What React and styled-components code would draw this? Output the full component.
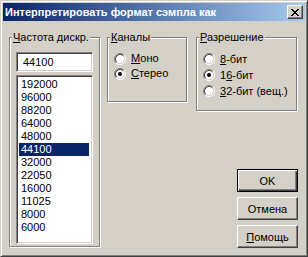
import React from "react";
import styled, { createGlobalStyle } from "styled-components";

const FACE = "#d4d0c8";

const Global = createGlobalStyle`
  html, body { margin: 0; padding: 0; background: ${FACE}; }
  body { font-family: "Liberation Sans", Arial, sans-serif; font-size: 11px; }
  * { box-sizing: border-box; }
`;

const Window = styled.div`
  width: 308px;
  height: 257px;
  display: flex;
  flex-direction: column;
  background: ${FACE};
  border: 1px solid;
  border-color: ${FACE} #404040 #404040 ${FACE};
  box-shadow: inset 1px 1px 0 #fff, inset -1px -1px 0 #808080;
  padding: 2px;
`;

const TitleBar = styled.div`
  height: 18px;
  flex: none;
  display: flex;
  align-items: center;
  justify-content: space-between;
  padding: 0 2px 0 2px;
  background: linear-gradient(to right, #0a246a, #a6caf0);
`;

const TitleText = styled.span`
  color: #fff;
  font-weight: bold;
  font-size: 11px;
  line-height: 13px;
  white-space: nowrap;
`;

const CloseButton = styled.div`
  width: 16px;
  height: 14px;
  display: flex;
  align-items: center;
  justify-content: center;
  background: ${FACE};
  border: 1px solid;
  border-color: #fff #404040 #404040 #fff;
  box-shadow: inset -1px -1px 0 #808080;
`;

const Client = styled.div`
  flex: 1;
  display: flex;
  gap: 7px;
  padding: 16px 7px 6px 6px;
`;

const Group = styled.div`
  width: ${(p) => p.$w}px;
  height: ${(p) => p.$h}px;
  flex: none;
  display: flex;
  flex-direction: column;
  align-self: flex-start;
  border: 1px solid #808080;
  box-shadow: inset 1px 1px 0 #fff, 1px 1px 0 #fff;
  padding: 0 ${(p) => p.$pad ?? 6}px;
`;

const Legend = styled.div`
  align-self: flex-start;
  margin: -7px 0 0 -4px;
  padding: 0 1px;
  background: ${FACE};
  color: #000;
  line-height: 13px;
  white-space: nowrap;
`;

const U = styled.span`
  text-decoration: underline;
  text-underline-offset: 1px;
`;

const Sunken = styled.div`
  background: #fff;
  border: 1px solid;
  border-color: #808080 #fff #fff #808080;
  box-shadow: inset 1px 1px 0 #404040, inset -1px -1px 0 ${FACE};
`;

const Field = styled(Sunken)`
  margin-top: 8px;
  height: 20px;
  display: flex;
  align-items: center;
  padding-left: 6px;
  line-height: 13px;
`;

const List = styled(Sunken)`
  margin-top: 3px;
  height: 169px;
  padding: 2px;
  display: flex;
  flex-direction: column;
`;

const Item = styled.div`
  height: 13px;
  line-height: 13px;
  padding-left: 2px;
  margin-right: 1px;
  background: ${(p) => (p.$sel ? "#0a246a" : "transparent")};
  color: ${(p) => (p.$sel ? "#fff" : "#000")};
`;

const RightCol = styled.div`
  flex: 1;
  display: flex;
  flex-direction: column;
`;

const TopRow = styled.div`
  display: flex;
  gap: 9px;
`;

const Options = styled.div`
  margin-top: 7px;
  display: flex;
  flex-direction: column;
`;

const RadioRow = styled.div`
  height: ${(p) => p.$h}px;
  display: flex;
  align-items: center;
  gap: 5px;
  line-height: 13px;
`;

const Buttons = styled.div`
  margin-top: auto;
  align-self: flex-end;
  display: flex;
  flex-direction: column;
  gap: 5px;
`;

const Button = styled.div`
  width: 61px;
  height: 23px;
  display: flex;
  align-items: center;
  justify-content: center;
  background: ${FACE};
  color: #000;
  border: 1px solid;
  border-color: ${(p) => (p.$def ? "#000" : "#fff #404040 #404040 #fff")};
  box-shadow: ${(p) =>
    p.$def
      ? "inset 1px 1px 0 #fff, inset -1px -1px 0 #404040, inset -2px -2px 0 #808080"
      : `inset -1px -1px 0 #808080`};
`;

const Radio = ({ checked }) => (
  <svg width="12" height="12" viewBox="0 0 12 12" style={{ flex: "none" }}>
    <circle cx="6" cy="6" r="4.5" fill="#fff" />
    <path d="M2.11 9.89 A5.5 5.5 0 0 1 9.89 2.11" fill="none" stroke="#808080" strokeWidth="1" />
    <path d="M9.89 2.11 A5.5 5.5 0 0 1 2.11 9.89" fill="none" stroke="#fff" strokeWidth="1" />
    <path d="M2.82 9.18 A4.5 4.5 0 0 1 9.18 2.82" fill="none" stroke="#404040" strokeWidth="1" />
    <path d="M9.18 2.82 A4.5 4.5 0 0 1 2.82 9.18" fill="none" stroke={FACE} strokeWidth="1" />
    {checked && <circle cx="6" cy="6" r="2" fill="#000" />}
  </svg>
);

const CloseGlyph = () => (
  <svg width="8" height="7" viewBox="0 0 8 7" shapeRendering="crispEdges">
    <path
      fill="#000"
      d="M0 0h2v1h-2z M6 0h2v1h-2z M1 1h2v1h-2z M5 1h2v1h-2z M2 2h4v1h-4z M3 3h2v1h-2z M2 4h4v1h-4z M1 5h2v1h-2z M5 5h2v1h-2z M0 6h2v1h-2z M6 6h2v1h-2z"
    />
  </svg>
);

const rates = ["192000", "96000", "88200", "64000", "48000", "44100", "32000", "22050", "16000", "11025", "8000", "6000"];

export default function App() {
  return (
    <>
      <Global />
      <Window>
        <TitleBar>
          <TitleText>Интерпретировать формат сэмпла как</TitleText>
          <CloseButton>
            <CloseGlyph />
          </CloseButton>
        </TitleBar>
        <Client>
          <Group $w={91} $h={210}>
            <Legend>
              <U>Ч</U>астота дискр.
            </Legend>
            <Field>44100</Field>
            <List>
              {rates.map((r) => (
                <Item key={r} $sel={r === "44100"}>
                  {r}
                </Item>
              ))}
            </List>
          </Group>
          <RightCol>
            <TopRow>
              <Group $w={80} $h={65}>
                <Legend>
                  <U>К</U>аналы
                </Legend>
                <Options>
                  <RadioRow $h={15}>
                    <Radio />
                    <span>
                      <U>М</U>оно
                    </span>
                  </RadioRow>
                  <RadioRow $h={15}>
                    <Radio checked />
                    <span>
                      <U>С</U>терео
                    </span>
                  </RadioRow>
                </Options>
              </Group>
              <Group $w={101} $h={74}>
                <Legend>
                  <U>Р</U>азрешение
                </Legend>
                <Options>
                  <RadioRow $h={16}>
                    <Radio />
                    <span>
                      <U>8</U>-бит
                    </span>
                  </RadioRow>
                  <RadioRow $h={16}>
                    <Radio checked />
                    <span>
                      1<U>6</U>-бит
                    </span>
                  </RadioRow>
                  <RadioRow $h={16}>
                    <Radio />
                    <span>
                      <U>3</U>2-бит (вещ.)
                    </span>
                  </RadioRow>
                </Options>
              </Group>
            </TopRow>
            <Buttons>
              <Button $def>OK</Button>
              <Button>Отмена</Button>
              <Button>
                <span>
                  <U>П</U>омощь
                </span>
              </Button>
            </Buttons>
          </RightCol>
        </Client>
      </Window>
    </>
  );
}
